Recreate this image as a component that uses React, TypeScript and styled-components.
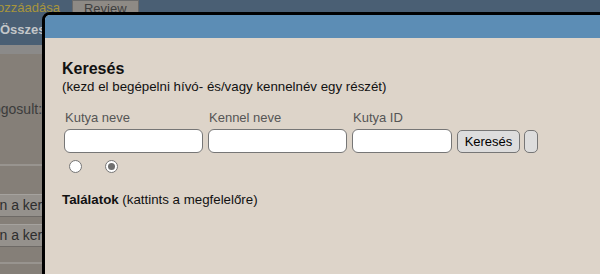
import styled, { createGlobalStyle } from "styled-components"

const GlobalStyle = createGlobalStyle`
  html, body {
    margin: 0;
    padding: 0;
    width: 600px;
    height: 274px;
    overflow: hidden;
    font-family: "Liberation Sans", Arial, sans-serif;
  }
`

const Page = styled.div`
  position: relative;
  width: 600px;
  height: 274px;
  overflow: hidden;
  background: #857f78;
`

/* page behind the dialog (dimmed) */
const TopNav = styled.div`
  display: flex;
  height: 16px;
  background: #4a5f74;
  align-items: stretch;
`

const NavTab = styled.div<{ $active?: boolean }>`
  display: flex;
  flex-shrink: 0;
  align-items: center;
  padding: ${({ $active }) => ($active ? "0" : "0 11px")};
  font-size: 13px;
  color: ${({ $active }) => ($active ? "#a8953c" : "#3e3e3e")};
  background: ${({ $active }) => ($active ? "#4a5f74" : "#8e8a85")};
  border: ${({ $active }) => ($active ? "none" : "1px solid #6a6a6a")};
  border-bottom: none;
  margin-left: ${({ $active }) => ($active ? "-47px" : "16px")};
  margin-right: ${({ $active }) => ($active ? "-4px" : "0")};
  line-height: 14px;
  white-space: nowrap;
`

const SubNav = styled.div`
  height: 27px;
  background: #4a5f74;
  display: flex;
  align-items: center;
  padding-bottom: 2px;
  font-size: 13px;
  font-weight: bold;
  color: #c3c6c9;
  white-space: nowrap;
`

const GreyStrip = styled.div`
  height: 9px;
  background: #8b8a89;
`

const Body = styled.div`
  display: flex;
  flex-direction: column;
`

const InfoText = styled.div`
  margin-top: 47px;
  height: 55px;
  font-size: 14px;
  color: #3c3c3c;
  margin-left: -14px;
  white-space: nowrap;
`

const Divider = styled.div`
  height: 2px;
  background: #98948f;
  margin-top: 8px;
`

const ListRow = styled.div<{ $first?: boolean }>`
  height: 21px;
  margin-top: ${({ $first }) => ($first ? "28px" : "7px")};
  background: #95918c;
  border-top: 1px solid #a5a29e;
  border-bottom: 1px solid #6e6a66;
  font-size: 14px;
  line-height: 21px;
  color: #2e2e2e;
  white-space: nowrap;
  margin-left: -55px;
`

const BottomLine = styled.div`
  height: 2px;
  background: #98948f;
  margin-top: 15px;
`

/* dialog */
const Dialog = styled.div`
  position: absolute;
  left: 42px;
  top: 12px;
  width: 600px;
  height: 300px;
  border: 3px solid #000;
  border-radius: 8px 0 0 0;
  background: #ddd4c9;
  overflow: hidden;
`

const TitleBar = styled.div`
  height: 23px;
  background: #5c8db5;
`

const Content = styled.div`
  padding: 20px 0 0 17px;
  display: flex;
  flex-direction: column;
  color: #111;
`

const Heading = styled.div`
  font-size: 16px;
  font-weight: bold;
  line-height: 21px;
`

const Hint = styled.div`
  font-size: 13.3px;
  line-height: 16px;
`

const FieldRow = styled.div`
  display: flex;
  align-items: flex-end;
  margin-top: 15px;
  margin-left: 2px;
`

const Field = styled.div`
  display: flex;
  flex-direction: column;
  margin-right: 5px;
`

const Label = styled.label`
  font-size: 13px;
  line-height: 15px;
  color: #555;
  margin-bottom: 4px;
  margin-left: 1px;
`

const TextInput = styled.input<{ $w: number }>`
  box-sizing: border-box;
  width: ${({ $w }) => $w}px;
  height: 24px;
  border: 1px solid #767676;
  border-radius: 6px;
  background: #fff;
  padding: 0 4px;
  font-size: 13px;
  outline: none;
`

const Button = styled.button<{ $narrow?: boolean }>`
  box-sizing: border-box;
  height: 23px;
  width: ${({ $narrow }) => ($narrow ? "14px" : "63px")};
  border: 1px solid #767676;
  border-radius: 5px;
  background: #dddddd;
  font-family: "Liberation Sans", Arial, sans-serif;
  font-size: 13px;
  color: #000;
  padding: 0;
  margin-right: 4px;
  margin-bottom: 0.5px;
`

const RadioRow = styled.div`
  display: flex;
  gap: 23px;
  margin-top: 7px;
  margin-left: 7px;
`

const Radio = styled.span<{ $checked?: boolean }>`
  box-sizing: border-box;
  width: 13px;
  height: 13px;
  border-radius: 50%;
  border: 1px solid #767676;
  background: #fff;
  position: relative;

  &::after {
    content: "";
    display: ${({ $checked }) => ($checked ? "block" : "none")};
    position: absolute;
    left: 2px;
    top: 2px;
    width: 7px;
    height: 7px;
    border-radius: 50%;
    background: #6f6f6f;
  }
`

const Results = styled.div`
  margin-top: 19px;
  font-size: 13.3px;
  line-height: 16px;

  b {
    font-weight: bold;
  }
`

export default function App() {
  return (
    <Page>
      <GlobalStyle />
      <TopNav>
        <NavTab $active>Kutya hozzáadása</NavTab>
        <NavTab>Review</NavTab>
      </TopNav>
      <SubNav>Összes kutya</SubNav>
      <GreyStrip />
      <Body>
        <InfoText>Jogosult: Admin</InfoText>
        <Divider />
        <ListRow $first>Kattintson a kereséshez</ListRow>
        <ListRow>Kattintson a kereséshez</ListRow>
        <BottomLine />
      </Body>

      <Dialog>
        <TitleBar />
        <Content>
          <Heading>Keresés</Heading>
          <Hint>(kezd el begépelni hívó- és/vagy kennelnév egy részét)</Hint>

          <FieldRow>
            <Field>
              <Label>Kutya neve</Label>
              <TextInput $w={139} />
            </Field>
            <Field>
              <Label>Kennel neve</Label>
              <TextInput $w={139} />
            </Field>
            <Field>
              <Label>Kutya ID</Label>
              <TextInput $w={100} />
            </Field>
            <Button>Keresés</Button>
            <Button $narrow />
          </FieldRow>

          <RadioRow>
            <Radio />
            <Radio $checked />
          </RadioRow>

          <Results>
            <b>Találatok</b> (kattints a megfelelőre)
          </Results>
        </Content>
      </Dialog>
    </Page>
  )
}
